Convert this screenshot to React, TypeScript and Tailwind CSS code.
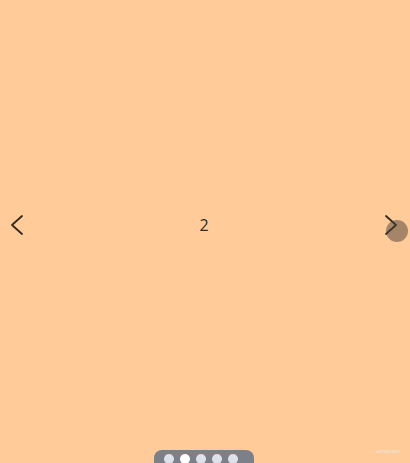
import React from 'react';

const Chevron = ({ dir }: { dir: 'left' | 'right' }) => (
  <svg width="14" height="22" viewBox="0 0 14 22" fill="none" stroke="#33291f" strokeWidth="1.8" strokeLinecap="round" strokeLinejoin="round">
    {dir === 'left' ? <path d="M12 2 L2 11 L12 20" /> : <path d="M2 2 L12 11 L2 20" />}
  </svg>
);

export default function App() {
  const dots = [0, 1, 2, 3, 4];
  const active = 1;
  return (
    <div className="relative h-[463px] w-[410px] overflow-hidden bg-[#ffcb99]" style={{ fontFamily: '"Open Sans", "Noto Sans", sans-serif' }}>
      {/* slide */}
      <div className="flex h-[449px] items-center pl-[10px] pr-[12px]">
        <button type="button" className="flex">
          <Chevron dir="left" />
        </button>
        <div className="flex-1 text-center text-[16px] text-[#2b2b2b]">2</div>
        <button type="button" className="relative flex">
          <Chevron dir="right" />
          {/* hover ripple */}
          <span className="pointer-events-none absolute left-[2px] top-[6px] h-[22px] w-[22px] rounded-full bg-[#4a4038]/50" />
        </button>
      </div>

      {/* pager */}
      <div className="absolute bottom-[-11px] left-[154px] flex h-[24px] w-[100px] gap-[6px] rounded-[8px] bg-[#7c8088] pl-[10px] pt-[4px]">
        {dots.map((d) => (
          <span key={d} className={`h-[10px] w-[10px] rounded-full ${d === active ? 'bg-white' : 'bg-[#dce2e9]'}`} />
        ))}
      </div>

      <span className="absolute bottom-[9px] right-[10px] text-[6px] leading-none text-[#e8e8e8]">amazeui</span>
    </div>
  );
}
